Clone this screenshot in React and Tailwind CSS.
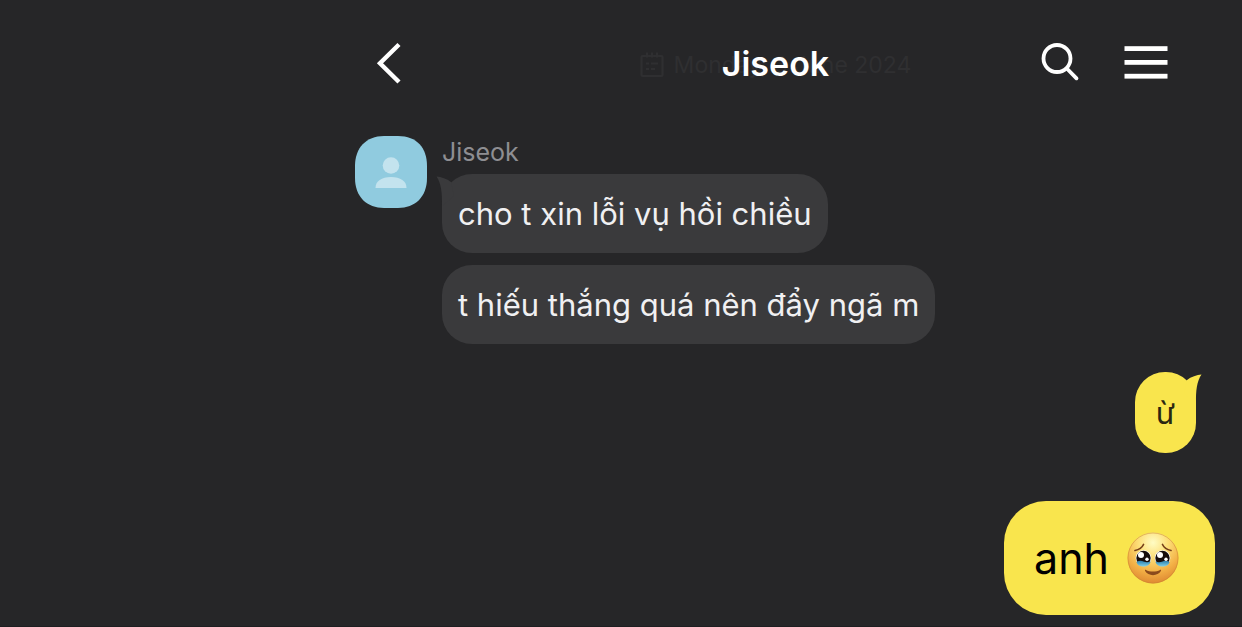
const contact = "Jiseok";

const received = [
  { id: 1, text: "cho t xin lỗi vụ hồi chiều", tail: true },
  { id: 2, text: "t hiếu thắng quá nên đẩy ngã m", tail: false },
];

function BackIcon() {
  return (
    <svg width="28" height="44" viewBox="0 0 28 44" fill="none" stroke="#fff" strokeWidth="4.400" strokeLinecap="butt" strokeLinejoin="miter" aria-hidden="true">
      <path d="M24 2.500 5 21.300 24 40" />
    </svg>
  );
}

function SearchIcon() {
  return (
    <svg width="44" height="44" viewBox="0 0 44 44" fill="none" stroke="#fff" strokeWidth="3.800" strokeLinecap="round" aria-hidden="true">
      <circle cx="19" cy="16.500" r="13.500" />
      <path d="M28.800 26.500 38.500 36.300" />
    </svg>
  );
}

function MenuIcon() {
  return (
    <svg width="60" height="44" viewBox="0 0 60 44" fill="#fff" aria-hidden="true">
      <rect x="8.500" y="4.200" width="43" height="4.800" />
      <rect x="8.500" y="18" width="43" height="4.800" />
      <rect x="8.500" y="31.800" width="43" height="4.800" />
    </svg>
  );
}

function CalendarIcon() {
  return (
    <svg width="24" height="26" viewBox="0 0 24 26" fill="none" stroke="currentColor" strokeWidth="2.200" aria-hidden="true">
      <rect x="1.500" y="4" width="21" height="20" rx="1" />
      <path d="M7 .5v5M12 .5v5M17 .5v5M6 11.500h3M11 11.500h7M6 17h3M11 17h4" />
    </svg>
  );
}

function Avatar() {
  return (
    <svg className="shrink-0" width="72" height="72" viewBox="0 0 72 72" role="img" aria-label={contact}>
      <path d="M29 0h14c19 0 29 12 29 30v12c0 19-12 30-29 30H29C12 72 0 61 0 42V30C0 12 11 0 29 0Z" fill="#90cbdf" />
      <circle cx="36" cy="29.500" r="8.300" fill="#c3e3ee" />
      <path d="M20.500 52c0-7 6-11 15.500-11s15.500 4 15.500 11Z" fill="#c3e3ee" />
    </svg>
  );
}

// Face holding back tears
function TearyFace() {
  return (
    <svg width="52" height="52" viewBox="0 0 52 52" role="img" aria-label="face holding back tears">
      <defs>
        <radialGradient id="skin" cx="50%" cy="20%" r="82%">
          <stop offset="0" stopColor="#fffcc4" />
          <stop offset="0.350" stopColor="#fddf78" />
          <stop offset="0.700" stopColor="#f3b045" />
          <stop offset="1" stopColor="#dd8530" />
        </radialGradient>
        <linearGradient id="tear" x1="0" y1="0" x2="0" y2="1">
          <stop offset="0" stopColor="#2b7fae" />
          <stop offset="1" stopColor="#86d3e6" />
        </linearGradient>
      </defs>
      <circle cx="26" cy="26" r="25.500" fill="url(#skin)" />
      <circle cx="26" cy="26" r="25" fill="none" stroke="#c98432" strokeOpacity="0.500" />
      <g fill="none" stroke="#77401a" strokeWidth="1.700" strokeLinecap="round">
        <path d="M8 18.500c4-.8 7-2.800 8.500-6" />
        <path d="M44 18.500c-4-.8-7-2.800-8.500-6" />
      </g>
      <circle cx="16.500" cy="26" r="7.800" fill="#fff" />
      <circle cx="35.500" cy="26" r="7.800" fill="#fff" />
      <circle cx="16.500" cy="26" r="7.200" fill="#160d0c" />
      <circle cx="35.500" cy="26" r="7.200" fill="#160d0c" />
      <path d="M9.500 30q3.500-2 7-.5t7 0c-.5 3.500-3.500 5-7 5s-6-1-7-4.500Z" fill="url(#tear)" />
      <path d="M28.500 29.500q3.500 1.500 7 0t7 .5c-1 3.500-3.500 4.500-7 4.500s-6.500-1.500-7-5Z" fill="url(#tear)" />
      <circle cx="14" cy="23" r="3" fill="#fff" />
      <circle cx="33" cy="23" r="3" fill="#fff" />
      <circle cx="20" cy="27.300" r="1.700" fill="#fff" />
      <circle cx="39" cy="27.300" r="1.700" fill="#fff" />
      <path d="M19 38c3.500 2 10.500 2 14 0 .8-.4 1.400.2.900 1-2.800 5.500-13 5.500-15.800 0-.4-.8.100-1.400.9-1Z" fill="#8b4a1c" />
    </svg>
  );
}

function ReceivedBubble({ text, tail }) {
  return (
    <div className="relative w-fit rounded-[30px] bg-[#3a3a3c] px-4 py-5 text-[31px] leading-[39px] text-[#f0f0f2]">
      {tail && (
        <svg className="absolute -left-1.5 top-0.5" width="24" height="30" viewBox="0 0 24 30" fill="#3a3a3c" aria-hidden="true">
          <path d="M.5.500C5 1 11 2.500 15 6l3 14L6 30C6.300 16 5 7 .5.500Z" />
        </svg>
      )}
      <p>{text}</p>
    </div>
  );
}

export default function App() {
  return (
    <div className="min-h-screen border-b border-[#1e1e21] bg-[#262628] font-['Inter','Liberation_Sans',sans-serif]">
      <div className="pr-[46px] pl-[355px]">
        <header className="relative grid grid-cols-[1fr_auto_1fr] items-center px-5 pt-10 pb-12">
          <div className="absolute inset-x-0 top-[51px] flex items-center justify-center gap-2.5 text-[23px] leading-7 text-[#2f2f31]">
            <CalendarIcon />
            <span>Monday, 3 June 2024</span>
          </div>
          <button type="button" aria-label="Back" className="relative justify-self-start">
            <BackIcon />
          </button>
          <h1 className="relative text-[34px] leading-12 font-semibold text-white">{contact}</h1>
          <div className="relative flex items-center gap-[34px] justify-self-end">
            <button type="button" aria-label="Search">
              <SearchIcon />
            </button>
            <button type="button" aria-label="Menu">
              <MenuIcon />
            </button>
          </div>
        </header>

        <main>
          <section className="flex items-start gap-[15px]">
            <Avatar />
            <div>
              <h2 className="text-[25px] leading-8 text-[#8e8e92]">{contact}</h2>
              <div className="mt-1.5 flex flex-col gap-3">
                {received.map((message) => (
                  <ReceivedBubble key={message.id} text={message.text} tail={message.tail} />
                ))}
              </div>
            </div>
          </section>

          <div className="mt-7 flex justify-end">
            <div className="relative rounded-[30px] bg-[#f9e54d] px-[21px] py-[21px] text-[31px] leading-[39px] text-[#2a2610]">
              <svg className="absolute top-0.5 -right-1.5" width="24" height="30" viewBox="0 0 24 30" fill="#f9e54d" aria-hidden="true">
                <path d="M23.500.500C19 1 13 2.500 9 6L6 20l12 10c-.3-14 1-23 5.500-29.500Z" />
              </svg>
              <p>ừ</p>
            </div>
          </div>
        </main>
      </div>

      <div className="mt-12 flex justify-end pr-[27px]">
        <div className="flex items-center gap-[18px] rounded-[42px] bg-[#f9e54d] py-[30px] pr-9 pl-[30px]">
          <p className="text-[43px] leading-[54px] text-black">anh</p>
          <TearyFace />
        </div>
      </div>
    </div>
  );
}
